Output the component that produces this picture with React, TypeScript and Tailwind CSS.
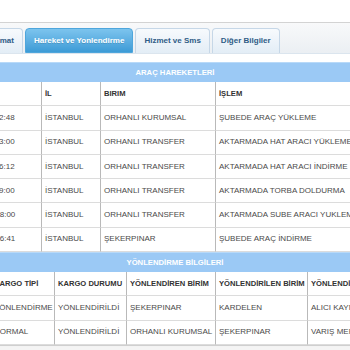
import React from "react";

const hareketler = [
  ["11.05.2022 12:48", "İSTANBUL", "ORHANLI KURUMSAL", "ŞUBEDE ARAÇ YÜKLEME"],
  ["11.05.2022 13:00", "İSTANBUL", "ORHANLI TRANSFER", "AKTARMADA HAT ARACI YÜKLEME"],
  ["11.05.2022 16:12", "İSTANBUL", "ORHANLI TRANSFER", "AKTARMADA HAT ARACI İNDİRME"],
  ["11.05.2022 19:00", "İSTANBUL", "ORHANLI TRANSFER", "AKTARMADA TORBA DOLDURMA"],
  ["12.05.2022 08:00", "İSTANBUL", "ORHANLI TRANSFER", "AKTARMADA SUBE ARACI YUKLEME"],
  ["12.05.2022 06:41", "İSTANBUL", "ŞEKERPINAR", "ŞUBEDE ARAÇ İNDİRME"],
];

const yonlendirmeler = [
  ["YÖNLENDİRME", "YÖNLENDİRİLDİ", "ŞEKERPINAR", "KARDELEN", "ALICI KAYNAKLI"],
  ["NORMAL", "YÖNLENDİRİLDİ", "ORHANLI KURUMSAL", "ŞEKERPINAR", "VARIŞ MERKEZİ"],
];

const tabs = ["Tazmat", "Hareket ve Yonlendirme", "Hizmet ve Sms", "Diğer Bilgiler"];

function Cell({ children, head, last }: { children: React.ReactNode; head?: boolean; last?: boolean }) {
  return (
    <div
      className={
        "flex items-center px-[3px] whitespace-nowrap overflow-hidden h-[24.3px] border-b border-[#dcdcdc] " +
        (last ? "" : "border-r border-r-[#b9b9b9] ") +
        (head ? "font-bold text-[#333] text-[7.6px]" : "text-[#4a4a4a] text-[8px]")
      }
    >
      {children}
    </div>
  );
}

function Bar({ title }: { title: string }) {
  return (
    <div className="h-[20px] bg-[#9bc9f5] border-t border-[#b8d9f8] flex items-center justify-center text-white font-bold text-[7.7px]">
      {title}
    </div>
  );
}

export default function App() {
  return (
    <div
      className="w-[350px] h-[350px] overflow-hidden bg-white text-[8px]"
      style={{ fontFamily: '"Liberation Sans", Arial, sans-serif' }}
    >
      <div className="h-[22px]" />
      <div className="h-[32px] border-t border-[#d3d3d3] border-b border-b-[#dbe5ee] bg-gradient-to-b from-[#f8f9fa] to-[#ebeff3] flex items-end">
        <div className="flex gap-[2px] ml-[-22px]">
          {tabs.map((t, i) =>
            i === 1 ? (
              <div
                key={t}
                className="h-[25px] px-[8px] flex items-center rounded-t-[4px] bg-gradient-to-b from-[#7cc4ee] to-[#3c9bd6] border border-[#4ea6dc] text-white font-bold text-[8px] [text-shadow:0_1px_0_rgba(0,0,0,0.15)]"
              >
                {t}
              </div>
            ) : (
              <div
                key={t}
                className="h-[25px] px-[8px] flex items-center rounded-t-[4px] bg-gradient-to-b from-[#f7fafd] to-[#e3edf6] border border-[#c6d7e7] border-b-0 text-[#2f5c86] font-bold text-[8px]"
              >
                {t}
              </div>
            )
          )}
        </div>
      </div>
      <div className="h-[8px]" />

      <Bar title="ARAÇ HAREKETLERİ" />
      <div className="ml-[-50px] w-[510px] grid grid-cols-[92px_59px_115px_1fr]">
        <Cell head>TARİH</Cell>
        <Cell head>İL</Cell>
        <Cell head>BIRIM</Cell>
        <Cell head last>İŞLEM</Cell>
        {hareketler.map((r) =>
          r.map((c, j) => (
            <Cell key={r[0] + j} last={j === 3}>
              {c}
            </Cell>
          ))
        )}
      </div>

      <Bar title="YÖNLENDİRME BİLGİLERİ" />
      <div className="ml-[-9px] w-[480px] grid grid-cols-[64px_72px_89px_92px_1fr]">
        {["KARGO TİPİ", "KARGO DURUMU", "YÖNLENDİREN BİRİM", "YÖNLENDİRİLEN BİRİM", "YÖNLENDİRME NEDENİ"].map((h, j) => (
          <Cell key={h} head last={j === 4}>
            {h}
          </Cell>
        ))}
        {yonlendirmeler.map((r) =>
          r.map((c, j) => (
            <Cell key={r[0] + j} last={j === 4}>
              {c}
            </Cell>
          ))
        )}
      </div>
      <div className="h-[2px] border-t border-[#cfcfcf] bg-[#f3f3f3]" />
      <div className="h-[10px] bg-[#f4f4f4]" />
    </div>
  );
}
